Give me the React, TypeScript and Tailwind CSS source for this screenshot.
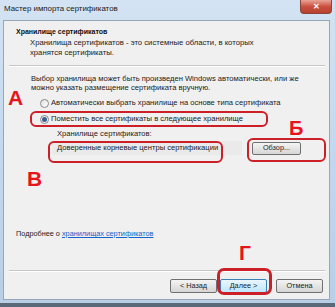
import React from 'react';

function Radio({ checked }: { checked?: boolean }) {
  return (
    <span className="relative inline-flex h-[9px] w-[9px] shrink-0 items-center justify-center rounded-full border border-[#8a8a8a] bg-gradient-to-br from-[#e2e2e2] to-[#ffffff]">
      {checked && <span className="h-[5px] w-[5px] rounded-full bg-[#3b5f8e]" />}
    </span>
  );
}

function Btn({ children, focused }: { children: React.ReactNode; focused?: boolean }) {
  return (
    <div
      className={`flex h-[14px] w-[47px] items-center justify-center rounded-[2px] border text-[7.3px] text-[#1e1e1e] ${
        focused ? 'border-[#3c7fb1] bg-gradient-to-b from-[#eaf6fd] to-[#bee6fd]' : 'border-[#707070] bg-gradient-to-b from-[#f4f4f4] to-[#d6d6d6]'
      }`}
    >
      {children}
    </div>
  );
}

export default function App() {
  return (
    <div
      className="relative h-[307px] w-[335px] overflow-hidden whitespace-nowrap bg-[#5b6878]"
      style={{ fontFamily: '"Liberation Sans", Arial, sans-serif' }}
    >
      <div className="flex h-[303px] flex-col bg-gradient-to-b from-[#d3e3f3] via-[#c3d8ee] to-[#b9cfe7]">
        {/* Title bar */}
        <div className="flex h-[20px] items-start justify-between pl-[4px] pr-[3px]">
          <span className="pt-[4px] text-[7.9px] leading-[10px] text-[#1a1a1a]">Мастер импорта сертификатов</span>
          <div className="flex h-[14px] w-[32px] items-center justify-center rounded-b-[4px] border border-t-0 border-[#8a4438] bg-gradient-to-b from-[#e9a396] via-[#c9503f] to-[#b8402f] text-[8px] font-bold text-white">
            ✕
          </div>
        </div>

        {/* Client area */}
        <div className="ml-[3px] mr-[5px] flex h-[280px] flex-col border border-[#98a6b6] bg-[#f0f0f0]">
          {/* Header */}
          <div className="flex flex-col pl-[12px] pt-[5px] pb-[7px]">
            <div className="text-[7px] font-bold leading-[11px] text-[#111]">Хранилище сертификатов</div>
            <div className="pl-[14px] pt-[1px] text-[7.7px] leading-[10px] text-[#222]">
              Хранилища сертификатов - это системные области, в которых
              <br />
              хранятся сертификаты.
            </div>
          </div>
          <div className="ml-[5px] mr-[4px] h-[2px] border-t border-[#c6c6c6] bg-white" />

          {/* Body */}
          <div className="flex flex-col pl-[27px] pt-[7px]">
            <div className="text-[7.6px] leading-[9px] text-[#222]">
              Выбор хранилища может быть произведен Windows автоматически, или же
              <br />
              можно указать размещение сертификата вручную.
            </div>
            <div className="mt-[6px] flex flex-col gap-[6px] pl-[9px]">
              <div className="flex h-[10px] items-center gap-[2px] text-[7.6px] text-[#222]">
                <Radio />
                <span>Автоматически выбрать хранилище на основе типа сертификата</span>
              </div>
              <div className="flex h-[10px] items-center gap-[2px] text-[7.6px] text-[#222]">
                <Radio checked />
                <span>Поместить все сертификаты в следующее хранилище</span>
              </div>
            </div>
            <div className="mt-[5px] pl-[26px] text-[7.6px] leading-[10px] text-[#222]">Хранилище сертификатов:</div>
            <div className="mt-[2px] flex items-center pl-[21px]">
              <div className="flex h-[14px] w-[190px] items-center bg-[#eaeaea] pl-[5px] text-[7.6px] text-[#222]">
                Доверенные корневые центры сертификации
              </div>
              <div className="ml-[10px] flex h-[13px] w-[49px] items-center justify-center rounded-[2px] border border-[#707070] bg-gradient-to-b from-[#f4f4f4] to-[#d6d6d6] text-[7.3px] text-[#1e1e1e]">
                Обзор...
              </div>
            </div>
          </div>

          <div className="flex-1" />

          <div className="pl-[12px] pb-[31px] text-[7.3px] leading-[10px] text-[#222]">
            Подробнее о <span className="text-[#1563c8] underline">хранилищах сертификатов</span>
          </div>

          <div className="ml-[5px] mr-[4px] h-[2px] border-t border-[#c6c6c6] bg-white" />
          <div className="flex items-center justify-end pr-[6px] pt-[7px] pb-[6px]">
            <Btn>&lt; Назад</Btn>
            <div className="ml-[3px]">
              <Btn focused>Далее &gt;</Btn>
            </div>
            <div className="ml-[9px]">
              <Btn>Отмена</Btn>
            </div>
          </div>
        </div>
      </div>

      {/* Annotations */}
      <span className="absolute left-[8px] top-[87px] text-[21px] font-bold leading-none text-[#e8141c]">А</span>
      <div className="absolute left-[30px] top-[111px] h-[16px] w-[238px] rounded-[6px] border-2 border-[#cc1f28]" />
      <span className="absolute left-[289px] top-[118px] text-[20px] font-bold leading-none text-[#e8141c]">Б</span>
      <div className="absolute left-[48px] top-[141px] h-[22px] w-[175px] rounded-[6px] border-2 border-[#cc1f28]" />
      <div className="absolute left-[247px] top-[138px] h-[24px] w-[79px] rounded-[6px] border-2 border-[#cc1f28]" />
      <span className="absolute left-[27px] top-[168px] text-[21px] font-bold leading-none text-[#e8141c]">В</span>
      <span className="absolute left-[239px] top-[242px] text-[21px] font-bold leading-none text-[#e8141c]">Г</span>
      <div className="absolute left-[217px] top-[268px] h-[27px] w-[55px] rounded-[7px] border-[3px] border-[#cc1f28]" />
    </div>
  );
}
